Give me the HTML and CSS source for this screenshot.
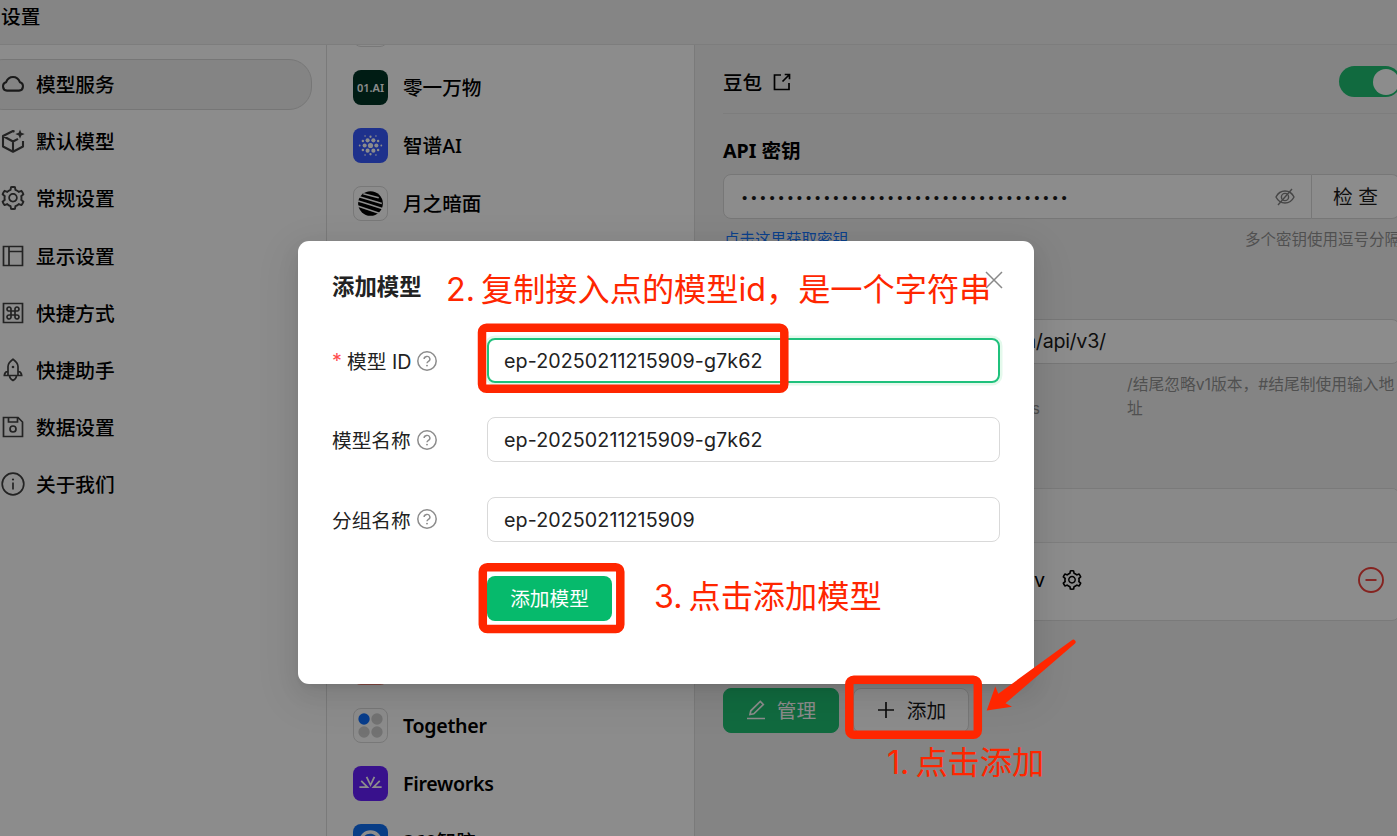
FILE: index.html
```html
<!DOCTYPE html>
<html lang="zh-CN">
<head>
    <meta charset="UTF-8">
    <meta name="viewport" content="width=device-width, initial-scale=1.0">
    <title>设置</title>
    <link rel="stylesheet" href="styles.css">
</head>
<body>
    <svg class="defs" width="0" height="0">
        <symbol id="gear" viewBox="64 64 896 896">
            <path d="M924.8 625.7l-65.5-56c3.1-19 4.7-38.4 4.7-57.8s-1.6-38.8-4.7-57.8l65.5-56a32.03 32.03 0 009.3-35.2l-.9-2.6a443.74 443.74 0 00-79.7-137.9l-1.8-2.1a32.12 32.12 0 00-35.1-9.5l-81.3 28.9c-30-24.6-63.5-44-99.7-57.6l-15.7-85a32.05 32.05 0 00-25.8-25.7l-2.7-.5c-52.1-9.4-106.9-9.4-159 0l-2.7.5a32.05 32.05 0 00-25.8 25.7l-15.8 85.4a351.86 351.86 0 00-99 57.4l-81.9-29.1a32 32 0 00-35.1 9.5l-1.8 2.1a446.02 446.02 0 00-79.7 137.9l-.9 2.6c-4.5 12.5-.8 26.5 9.3 35.2l66.3 56.6c-3.1 18.8-4.6 38-4.6 57.1 0 19.2 1.5 38.4 4.6 57.1L99 625.5a32.03 32.03 0 00-9.3 35.2l.9 2.6c18.1 50.4 44.9 96.9 79.7 137.9l1.8 2.1a32.12 32.12 0 0035.1 9.5l81.9-29.1c29.8 24.5 63.1 43.9 99 57.4l15.8 85.4a32.05 32.05 0 0025.8 25.7l2.7.5a449.4 449.4 0 00159 0l2.7-.5a32.05 32.05 0 0025.8-25.7l15.7-85a350 350 0 0099.7-57.6l81.3 28.9a32 32 0 0035.1-9.5l1.8-2.1c34.8-41.1 61.6-87.5 79.7-137.9l.9-2.6c4.5-12.3.8-26.3-9.3-35zM788.3 465.9c2.5 15.1 3.8 30.6 3.8 46.1s-1.3 31-3.8 46.1l-6.6 40.1 74.7 63.9a370.03 370.03 0 01-42.6 73.6L721 702.8l-31.4 25.8c-23.9 19.6-50.5 35-79.3 45.8l-38.1 14.3-17.9 97a377.5 377.5 0 01-85 0l-17.9-97.2-37.8-14.5c-28.5-10.8-55-26.2-78.7-45.7l-31.4-25.9-93.4 33.2c-17-22.9-31.2-47.6-42.6-73.6l75.5-64.5-6.5-40c-2.4-14.9-3.7-30.3-3.7-45.5 0-15.3 1.2-30.6 3.7-45.5l6.5-40-75.5-64.5c11.3-26.1 25.6-50.7 42.6-73.6l93.4 33.2 31.4-25.9c23.7-19.5 50.2-34.9 78.7-45.7l37.9-14.3 17.9-97.2c28.1-3.2 56.8-3.2 85 0l17.9 97 38.1 14.3c28.7 10.8 55.4 26.2 79.3 45.8l31.4 25.8 92.8-32.9c17 22.9 31.2 47.6 42.6 73.6L781.8 426l6.5 39.9zM512 326c-97.2 0-176 78.8-176 176s78.8 176 176 176 176-78.8 176-176-78.8-176-176-176zm79.2 255.2A111.6 111.6 0 01512 614c-29.9 0-58-11.7-79.2-32.8A111.6 111.6 0 01400 502c0-29.9 11.7-58 32.8-79.2C454 401.6 482.1 390 512 390c29.9 0 58 11.6 79.2 32.8A111.6 111.6 0 01624 502c0 29.9-11.7 58-32.8 79.2z"/>
        </symbol>
        <symbol id="help" viewBox="0 0 20 20">
            <circle cx="10" cy="10" r="9.2" fill="none" stroke="currentColor" stroke-width="1.5"/>
            <path d="M7.1 8.1a2.9 2.6 0 1 1 4.3 2.2c-.9.5-1.4 1-1.4 2" fill="none" stroke="currentColor" stroke-width="1.4"/>
            <circle cx="10" cy="14.6" r=".95"/>
        </symbol>
    </svg>

    <div class="app">
        <header class="navbar">设置</header>
        <div class="layout">
            <nav class="menu">
                <a class="menu-item active">
                    <svg class="icon" viewBox="0 0 24 24"><path class="line thick" d="M6 18.6a4.3 4.3 0 0 1-.9-8.4C6.3 7 8.900 5 12 5s5.700 2 6.900 5.200a4.300 4.300 0 0 1-.9 8.400z"/></svg>
                    模型服务
                </a>
                <a class="menu-item">
                    <svg class="icon" viewBox="0 0 24 24"><path class="line thick" d="M13.500 2.800 12 2 2 7v10.500l10 5.300 10-5.300V12M2 7l10 5.500 5-2.700M12 12.500v10"/><path d="M19 .5l1.300 3.300 3.400 1.300-3.400 1.300L19 9.800l-1.300-3.400-3.400-1.300 3.400-1.300z"/></svg>
                    默认模型
                </a>
                <a class="menu-item">
                    <svg class="icon"><use href="#gear"/></svg>
                    常规设置
                </a>
                <a class="menu-item">
                    <svg class="icon" viewBox="0 0 24 24"><path class="line" d="M2.500 2.500h19v19h-19zM8 2.500v19M8 7.500h13.500"/></svg>
                    显示设置
                </a>
                <a class="menu-item">
                    <svg class="icon" viewBox="0 0 24 24"><path class="line" d="M2.500 2.500h19v19h-19z"/><path class="line" d="M10 10H8.300A2 2 0 1 1 10 8.300v7.400A2 2 0 1 1 8.300 14h7.400a2 2 0 1 1-1.700 1.700V8.300a2 2 0 1 1 1.700 1.700z"/></svg>
                    快捷方式
                </a>
                <a class="menu-item">
                    <svg class="icon" viewBox="0 0 24 24"><path class="line" d="M7 17.500V8.500C7 5.500 9 3.300 12 1.200c3 2.100 5 4.300 5 7.300v9zM7 12.500c-2.200 1.200-3.600 2.900-3.700 5H7M17 12.500c2.200 1.200 3.600 2.900 3.700 5H17M8.500 18c.3 2.200 1.600 3.700 3.500 4.600 1.900-.9 3.200-2.400 3.500-4.600"/><circle cx="12" cy="9" r="1.300"/></svg>
                    快捷助手
                </a>
                <a class="menu-item">
                    <svg class="icon" viewBox="0 0 24 24"><path class="line" d="M2.500 2.500h14.500l4.500 4.500v14.500h-19zM7.500 2.500V7h9V2.500"/><circle class="line" cx="12" cy="14" r="3"/></svg>
                    数据设置
                </a>
                <a class="menu-item">
                    <svg class="icon" viewBox="0 0 24 24"><circle class="line" cx="12" cy="12" r="10.800"/><path class="line" d="M12 10.500v7"/><circle cx="12" cy="7.500" r="1.100"/></svg>
                    关于我们
                </a>
            </nav>

            <section class="providers">
                <div class="provider-group">
                    <div class="provider"><span class="logo bordered"></span></div>
                    <div class="provider"><span class="logo yi">01.AI</span>零一万物</div>
                    <div class="provider">
                        <span class="logo zhipu">
                            <svg viewBox="0 0 34 34">
                                <circle cx="17" cy="17" r="2.500"/>
                                <circle cx="11.300" cy="17" r="2"/><circle cx="22.700" cy="17" r="2"/>
                                <circle cx="14.200" cy="12" r="2"/><circle cx="19.800" cy="12" r="2"/>
                                <circle cx="14.200" cy="22" r="2"/><circle cx="19.800" cy="22" r="2"/>
                                <circle cx="9.600" cy="12.700" r="1.200"/><circle cx="24.400" cy="12.700" r="1.200"/>
                                <circle cx="9.600" cy="21.300" r="1.200"/><circle cx="24.400" cy="21.300" r="1.200"/>
                                <circle cx="17" cy="8.500" r="1.100"/><circle cx="17" cy="25.500" r="1.100"/>
                                <circle cx="6.500" cy="17" r=".9"/><circle cx="27.500" cy="17" r=".9"/>
                                <circle cx="11.700" cy="7.800" r=".8"/><circle cx="22.300" cy="7.800" r=".8"/>
                                <circle cx="11.700" cy="26.200" r=".8"/><circle cx="22.300" cy="26.200" r=".8"/>
                            </svg>
                        </span>智谱AI
                    </div>
                    <div class="provider">
                        <span class="logo bordered">
                            <svg viewBox="0 0 34 34">
                                <circle cx="17" cy="17" r="12"/>
                                <path class="stripes" d="M10 7.500l15 4M6 10.500l22 6.500M13 17l16 5M5 14.500l8 2.500M4.500 19.500l21 7"/>
                            </svg>
                        </span>月之暗面
                    </div>
                </div>
                <div class="provider-group">
                    <div class="provider"><span class="logo coral"></span></div>
                    <div class="provider">
                        <span class="logo bordered together">
                            <svg viewBox="0 0 34 34">
                                <circle class="blue" cx="10.700" cy="10.700" r="5.500"/><circle cx="23.300" cy="10.700" r="5.500"/>
                                <circle cx="10.700" cy="23.300" r="5.500"/><circle cx="23.300" cy="23.300" r="5.500"/>
                            </svg>
                        </span><span class="latin">Together</span>
                    </div>
                    <div class="provider">
                        <span class="logo fireworks">
                            <svg viewBox="0 0 34 34"><path class="line" d="M13.200 10.500l3.800 8 3.800-8M8 14.500l6 6H6.200M26 14.500l-6 6h7.800"/></svg>
                        </span><span class="latin">Fireworks</span>
                    </div>
                    <div class="provider">
                        <span class="logo zhinao">
                            <svg viewBox="0 0 34 34"><path d="M6 17a11 11 0 0 1 22 0h-2.500c-1-4-4-6.800-8-7.500C13 9 9.500 12 8.500 17z"/><circle cx="18" cy="15" r="3.300"/></svg>
                        </span>360智脑
                    </div>
                </div>
            </section>

            <main class="content">
                <div class="content-head">
                    <h2>豆包</h2>
                    <svg class="export" viewBox="0 0 18 18"><path class="line" d="M8 2H1.500v14.500H16V10M9.500 8.500 16 2M11.700 1.500h4.800v4.800"/></svg>
                    <span class="switch"></span>
                </div>
                <h3>API 密钥</h3>
                <div class="key-row">
                    <div class="field key-field">
                        <span class="dots">••••••••••••••••••••••••••••••••••••</span>
                        <svg class="eye" viewBox="0 0 20 20"><path d="M1 10c2-4 5-6 9-6s7 2 9 6c-2 4-5 6-9 6s-7-2-9-6zM17 2 3 18"/><circle cx="10" cy="10" r="3.600"/></svg>
                    </div>
                    <div class="check-btn">检 查</div>
                </div>
                <div class="hint-row">
                    <a class="link">点击这里获取密钥</a>
                    <span>多个密钥使用逗号分隔</span>
                </div>
                <div class="field url-field">https://ark.cn-beijing.volces.com/api/v3/</div>
                <div class="hint-row url-hint">
                    <div class="preview">https://ark.cn-beijing.volces.com<p>/api/v3/chat/completions</p></div>
                    <span class="url-note">/结尾忽略v1版本，#结尾制使用输入地址</span>
                </div>
                <div class="card">
                    <div class="card-head"></div>
                    <div class="card-row">
                        <span class="model-name">v</span>
                        <svg class="card-gear"><use href="#gear"/></svg>
                        <svg class="minus" viewBox="0 0 26 26"><circle cx="13" cy="13" r="12"/><path d="M7.500 13h11"/></svg>
                    </div>
                </div>
                <div class="actions">
                    <button class="btn primary">
                        <svg viewBox="0 0 20 20"><path class="line" d="M1 18.500h18M4 14.500l.8-3.700L14.300 1.500l3 3-9.500 9.300z"/></svg>管理
                    </button>
                    <button class="btn">
                        <svg viewBox="0 0 20 20"><path class="line" d="M10 2v16M2 10h16"/></svg>添加
                    </button>
                </div>
            </main>
        </div>
    </div>

    <div class="mask">
        <div class="modal">
            <div class="modal-head">
                <span>添加模型</span>
                <svg class="close" viewBox="0 0 18 18"><path d="M1 1l16 16M17 1 1 17"/></svg>
            </div>
            <div class="form-row">
                <label><em>*</em>模型 ID<svg class="help"><use href="#help"/></svg></label>
                <div class="input focus">ep-20250211215909-g7k62</div>
            </div>
            <div class="form-row">
                <label>模型名称<svg class="help"><use href="#help"/></svg></label>
                <div class="input">ep-20250211215909-g7k62</div>
            </div>
            <div class="form-row">
                <label>分组名称<svg class="help"><use href="#help"/></svg></label>
                <div class="input">ep-20250211215909</div>
            </div>
            <button class="submit-btn">添加模型</button>
        </div>
    </div>

    <!-- step annotations -->
    <div class="notes">
        <svg class="marks" viewBox="0 0 1397 836">
            <g fill="none" stroke="#ff2600" stroke-width="8.500">
                <rect x="482" y="327.800" width="302.300" height="61" rx="4.500"/>
                <rect x="482.800" y="567.300" width="137.500" height="61.800" rx="4.500"/>
                <rect x="849.300" y="679.800" width="128.500" height="55" rx="4.500"/>
            </g>
            <path fill="#ff2600" d="M986.700 710.500l8.600-24 3 7.200L1071.800 640.300a2.300 2.300 0 0 1 3.200 3.300L1005.500 703.300l6.500 3.500z"/>
        </svg>
        <span class="note note-1">1. 点击添加</span>
        <span class="note note-2">2. 复制接入点的模型id，是一个字符串</span>
        <span class="note note-3">3. 点击添加模型</span>
    </div>
</body>
</html>
```
FILE: styles.css
```css
:root {
    --primary: #1fc174;
    --border: #d9d9d9;
    --text: #1a1a1a;
}

* {
    margin: 0;
    padding: 0;
    box-sizing: border-box;
}

body {
    position: relative;
    width: 1397px;
    height: 836px;
    overflow: hidden;
    font-family: Inter, "Noto Sans CJK SC", sans-serif;
    font-size: 19.7px;
    color: #000;
}

svg {
    fill: currentColor;
    flex: none;
}

.defs {
    position: absolute;
}

.line {
    fill: none;
    stroke: currentColor;
    stroke-width: 1.7;
}

.thick {
    stroke-width: 2.1;
    stroke-linejoin: round;
}

.app {
    width: 1428px;
    height: 836px;
    display: flex;
    flex-direction: column;
    background: #fff;
}

.navbar {
    height: 45px;
    padding: 0 0 13px 1px;
    display: flex;
    align-items: center;
    background: #f2f2f2;
    border-bottom: 1px solid #e4e4e4;
    font-weight: 500;
}

.layout {
    flex: 1;
    display: flex;
    min-height: 0;
}

/* Left menu */
.menu {
    width: 327px;
    padding: 14px 14px 0 0;
    display: flex;
    flex-direction: column;
    gap: 6.2px;
    border-right: 1px solid #dedede;
}

.menu-item {
    height: 51px;
    margin-left: -20px;
    padding: 0 0 2px 20px;
    display: flex;
    align-items: center;
    gap: 11px;
    border: 1px solid transparent;
    border-radius: 23px;
    font-weight: 500;
}

.menu-item.active {
    background: #f1f1f1;
    border-color: #d8d8d8;
}

.icon {
    width: 24px;
    height: 24px;
    margin-top: 1px;
    color: #404040;
}

.active .icon {
    color: #303030;
}

/* Provider list */
.providers {
    width: 368px;
    display: flex;
    flex-direction: column;
    justify-content: space-between;
    border-right: 1px solid #dedede;
    overflow: hidden;
}

.provider-group:first-child {
    margin-top: -45px;
}

.provider-group:last-child {
    margin-bottom: -34px;
}

.provider {
    height: 58px;
    padding-left: 26px;
    display: flex;
    align-items: center;
    gap: 15px;
    font-family: "Noto Sans", "Noto Sans CJK SC", sans-serif;
    font-size: 19.6px;
    font-weight: 500;
}

.latin {
    font-weight: 600;
    letter-spacing: -0.3px;
}

/* CJK glyphs sit lower than Latin ones, lift the label but not the logo */
.provider-group:first-child .provider,
.provider:last-child {
    padding-bottom: 2px;
}

.provider-group:first-child .logo,
.provider:last-child .logo {
    margin-top: 2px;
}

.logo {
    width: 35px;
    height: 35px;
    display: flex;
    align-items: center;
    justify-content: center;
    border-radius: 8px;
    overflow: hidden;
    color: #fff;
}

.logo svg {
    width: 35px;
    height: 35px;
}

.bordered {
    border: 1px solid #dadada;
    color: #000;
}

.stripes {
    fill: none;
    stroke: #fff;
    stroke-width: 1.5;
}

.yi {
    background: #003425;
    font-size: 11px;
    font-weight: 600;
}

.zhipu {
    background: #3859ff;
}

.coral {
    background: #f08878;
}

.together {
    color: #cfcfcf;
}

.blue {
    fill: #0f6fff;
}

.fireworks {
    background: #6720ff;
}

.zhinao {
    background: #0f70f5;
}

/* Provider settings */
.content {
    flex: 1;
    padding: 0 28px;
    background: #f1f1f1;
}

.content-head {
    height: 69px;
    margin-bottom: 23px;
    padding: 6px 0 1px;
    display: flex;
    align-items: center;
    border-bottom: 1px solid #e3e3e3;
}

.content-head h2 {
    font-size: 19.6px;
    font-weight: 500;
}

.export {
    width: 18px;
    height: 18px;
    margin-left: 11px;
}

.switch {
    width: 62px;
    height: 31px;
    margin: 0 -1px 0 auto;
    padding: 2.5px;
    display: flex;
    justify-content: flex-end;
    border-radius: 16px;
    background: var(--primary);
}

.switch::after {
    content: "";
    width: 26px;
    height: 26px;
    border-radius: 50%;
    background: #fff;
}

.content h3 {
    height: 29px;
    margin-bottom: 8px;
    font-family: "Noto Sans", "Noto Sans CJK SC", sans-serif;
    font-size: 19.6px;
    font-weight: 700;
    line-height: 27px;
}

.key-row {
    display: flex;
    height: 45px;
}

.field {
    height: 45px;
    padding: 0 16px;
    display: flex;
    align-items: center;
    justify-content: space-between;
    border: 1.5px solid var(--border);
    border-radius: 8px;
    background: #fff;
    color: var(--text);
}

.key-field {
    width: 589px;
    padding-left: 18px;
    border-radius: 8px 0 0 8px;
}

.dots {
    padding-top: 2px;
    font-family: "Liberation Sans", sans-serif;
    font-size: 15px;
    letter-spacing: 3.88px;
}

.eye {
    width: 20px;
    height: 20px;
    fill: none;
    stroke: #808080;
    stroke-width: 1.4;
}

.check-btn {
    flex: 1;
    display: flex;
    align-items: center;
    justify-content: center;
    padding-bottom: 2px;
    border: 1px solid var(--border);
    border-left: 0;
    border-radius: 0 8px 8px 0;
    background: #fff;
    color: var(--text);
}

.hint-row {
    display: flex;
    justify-content: space-between;
    padding-top: 9px;
    font-size: 15.5px;
    line-height: 24.7px;
    color: #939393;
}

.link {
    padding-left: 1px;
    color: #1677ff;
}

.url-field {
    margin-top: 66px;
    padding-left: 15px;
    letter-spacing: -0.31px;
}

.url-hint {
    height: 124px;
}

.preview {
    width: 317px;
}

.preview p {
    text-align: right;
}

.url-hint .url-note {
    width: 274px;
    margin-right: -1px;
    font-size: 15.75px;
}

.card {
    height: 133px;
    border: 1px solid #dedede;
    border-radius: 8px;
    background: #fff;
}

.card-head {
    height: 54px;
    background: #f9f9f9;
    border-bottom: 1px solid #e6e6e6;
    border-radius: 8px 8px 0 0;
}

.card-row {
    height: 77px;
    padding: 0 15px 2px 0;
    display: flex;
    align-items: center;
}

.model-name {
    width: 321px;
    text-align: right;
}

.card-gear {
    width: 20px;
    height: 20px;
    margin-left: 17px;
}

.minus {
    width: 26px;
    height: 26px;
    margin-left: auto;
    fill: none;
    stroke: #f2413b;
    stroke-width: 1.9;
}

.actions {
    display: flex;
    gap: 14px;
    margin-top: 67px;
}

.btn {
    width: 116px;
    height: 45px;
    padding-bottom: 1px;
    display: flex;
    align-items: center;
    justify-content: center;
    gap: 11px;
    border: 1px solid var(--border);
    border-radius: 8px;
    background: #fff;
    color: var(--text);
    font: inherit;
}

.btn svg {
    width: 20px;
    height: 20px;
}

.btn.primary {
    background: var(--primary);
    border-color: var(--primary);
    color: #fff;
}

/* Modal */
.mask {
    position: absolute;
    inset: 0;
    padding: 241px 0 0 298px;
    background: rgba(0, 0, 0, 0.45);
}

.modal {
    width: 736px;
    height: 443px;
    padding: 26px 34px;
    border-radius: 11px;
    background: #fff;
    color: #222;
    box-shadow: 0 8px 22px rgba(0, 0, 0, 0.08), 0 4px 8px -5px rgba(0, 0, 0, 0.12), 0 12px 39px 11px rgba(0, 0, 0, 0.05);
}

.modal-head {
    height: 36px;
    margin-bottom: 35px;
    display: flex;
    align-items: center;
    justify-content: space-between;
    font-size: 22.4px;
    font-weight: 600;
}

.close {
    width: 18px;
    height: 18px;
    margin: -10px -3px 0 0;
    stroke: #888;
    stroke-width: 1.5;
}

.form-row {
    display: flex;
    margin-bottom: 34.3px;
}

.form-row label {
    width: 155px;
    display: flex;
    align-items: center;
}

.form-row em {
    width: 15px;
    color: #ff4d4f;
    font-style: normal;
}

.help {
    width: 20px;
    height: 20px;
    margin-left: 6px;
    color: #8c8c8c;
}

.input {
    flex: 1;
    height: 45px;
    padding: 1px 0 0 16px;
    display: flex;
    align-items: center;
    border: 1.4px solid var(--border);
    border-radius: 8px;
    letter-spacing: 0.07px;
}

.input.focus {
    padding-left: 15px;
    border: 2px solid #1fc17c;
    box-shadow: 0 0 0 2.5px #e4f9ec;
}

.submit-btn {
    width: 125px;
    height: 45px;
    margin-left: 155px;
    padding-bottom: 1px;
    border: 0;
    border-radius: 8px;
    background: #06ba6c;
    color: #fff;
    font: inherit;
}

/* Annotations drawn over the page */
.notes,
.marks {
    position: absolute;
    inset: 0;
}

.note {
    position: absolute;
    color: #ff2600;
    font-size: 32.2px;
    line-height: 40px;
    word-spacing: -3px;
    white-space: nowrap;
}

.note-1 {
    left: 887px;
    top: 743px;
}

.note-2 {
    left: 446px;
    top: 270px;
}

.note-3 {
    left: 654px;
    top: 577px;
}
```
